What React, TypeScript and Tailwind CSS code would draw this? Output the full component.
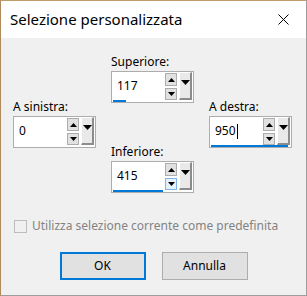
import React from 'react';

const font = { fontFamily: '"Noto Sans", "Segoe UI", sans-serif' };

function Tri({ down = false, size = 7 }: { down?: boolean; size?: number }) {
    const h = Math.ceil(size / 2) + 0;
    return (
        <svg width={size} height={h} viewBox={`0 0 ${size} ${h}`} className="block">
            {down ? (
                <polygon points={`0,0 ${size},0 ${size / 2},${h}`} fill="#000" />
            ) : (
                <polygon points={`0,${h} ${size},${h} ${size / 2},0`} fill="#000" />
            )}
        </svg>
    );
}

function SpinBox({ label, value, bar, cursor = false, downHot = false }: { label: string; value: string; bar: number; cursor?: boolean; downHot?: boolean }) {
    return (
        <div className="flex flex-col w-[83px]">
            <div className="text-[12px] leading-4 mb-[1px] text-black">{label}</div>
            <div className="flex flex-col h-[32px] border border-[#adadad] bg-white">
                <div className="flex flex-1 items-stretch">
                    <div className="flex-1 flex items-center pl-[5px] text-[12px] text-black">
                        {value}
                        {cursor && <span className="inline-block w-[1px] h-[15px] bg-black ml-[1px]" />}
                    </div>
                    {/* pulsanti su/giu */}
                    <div className="flex flex-col gap-[2px] pt-[1px] w-[12px] mr-[2px]">
                        <div className="h-[13px] bg-[#e1e1e1] border border-[#adadad] flex items-center justify-center">
                            <Tri />
                        </div>
                        <div className={`h-[12px] border flex items-center justify-center ${downHot ? 'bg-[#e5f1fb] border-[#7eb4ea]' : 'bg-[#e1e1e1] border-[#adadad]'}`}>
                            <Tri down />
                        </div>
                    </div>
                    {/* pulsante menu */}
                    <div className="w-[13px] mr-[1px] bg-[#e9e9e9] border-r-2 border-b-2 border-[#8c8c8c] border-l border-t border-l-white border-t-white flex items-start justify-center pt-[7px]">
                        <Tri down size={9} />
                    </div>
                </div>
                <div className="h-[3px] px-[1px]">
                    <div className="h-full bg-[#0078d7]" style={{ width: bar }} />
                </div>
            </div>
        </div>
    );
}

export default function App() {
    return (
        <div style={font} className="w-[307px] h-[296px] bg-[#f0f0f0] border-l border-t border-l-[#b08a5c] border-t-[#c19a6b] border-r border-b border-r-[#9d9d9d] border-b-[#9d9d9d] flex flex-col overflow-hidden">
            {/* barra del titolo */}
            <div className="h-[37px] bg-white flex items-center justify-between pl-[9px] pr-[17px]">
                <span className="text-[15px] text-black">Selezione personalizzata</span>
                <svg width="11" height="11" viewBox="0 0 11 11">
                    <path d="M0.5 0.5 L10.5 10.5 M10.5 0.5 L0.5 10.5" stroke="#000" strokeWidth="1" />
                </svg>
            </div>

            <div className="flex items-center gap-[15px] pl-[12px] pt-[16px]">
                <SpinBox label="A sinistra:" value="0" bar={0} />
                <div className="flex flex-col gap-[41px]">
                    <SpinBox label="Superiore:" value="117" bar={13} />
                    <SpinBox label="Inferiore:" value="415" bar={50} downHot />
                </div>
                <SpinBox label="A destra:" value="950" bar={77} cursor />
            </div>

            <label className="flex items-center gap-[5px] pl-[13px] mt-[24px]">
                <span className="w-[13px] h-[13px] border border-[#bcbcbc] bg-[#f0f0f0]" />
                <span className="text-[12px] text-[#838383]">Utilizza selezione corrente come predefinita</span>
            </label>

            <div className="flex justify-center gap-[16px] mt-[17px]">
                <button className="w-[86px] h-[28px] bg-[#e1e1e1] border-2 border-[#0078d7] text-[12px] text-black">OK</button>
                <button className="w-[86px] h-[28px] bg-[#e1e1e1] border border-[#adadad] text-[12px] text-black">Annulla</button>
            </div>
        </div>
    );
}
